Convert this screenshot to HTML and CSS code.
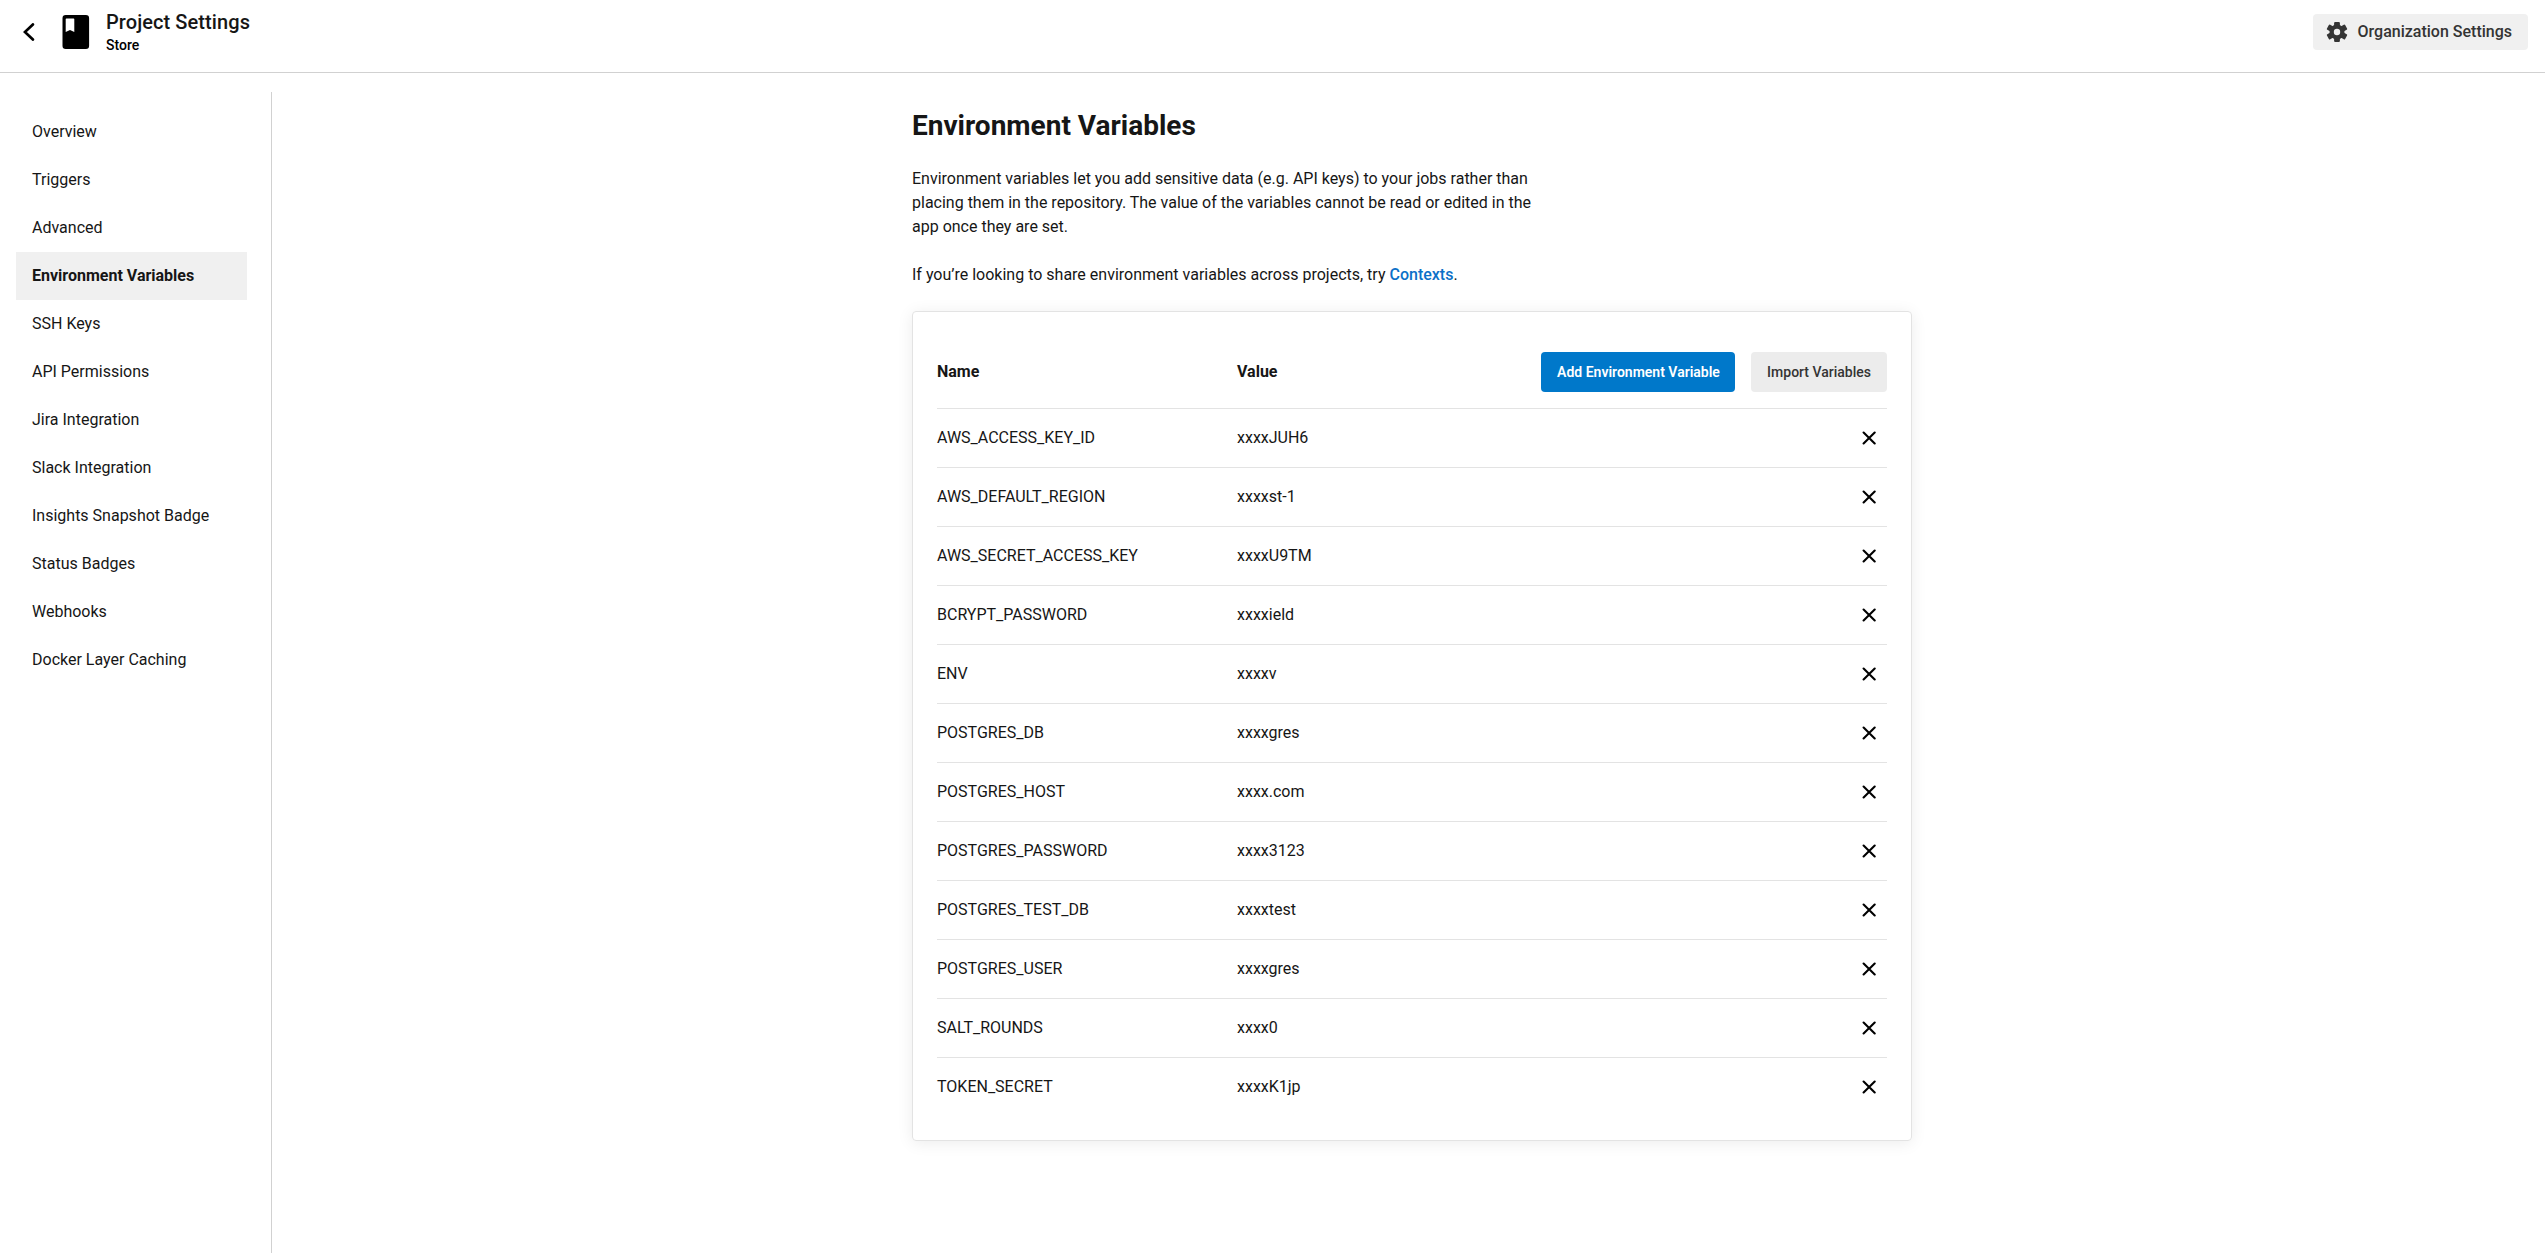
FILE: index.html
```html
<!DOCTYPE html>
<html lang="en">
<head>
<meta charset="utf-8">
<title>Project Settings</title>
<link rel="stylesheet" href="styles.css">
</head>
<body>
<svg class="sprite" aria-hidden="true">
  <symbol id="close" viewBox="0 0 14 14"><path d="M1.6 1.500 12.700 12.500M12.700 1.500 1.600 12.500" fill="none" stroke="#000" stroke-width="2.1" stroke-linecap="round"/></symbol>
  <symbol id="tooth" viewBox="-12 -12 24 24"><rect x="-2.900" y="-10" width="5.800" height="20" rx="1"/></symbol>
</svg>
<header class="topbar">
  <a class="back" href="#" aria-label="Back"><svg width="12" height="18" viewBox="0 0 12 18"><path d="M9.900 1.400 1.900 9l8 7.600" fill="none" stroke="#000" stroke-width="2.700" stroke-linecap="round"/></svg></a>
  <svg class="book" width="28" height="34" viewBox="0 0 28 34"><path fill="#000" fill-rule="evenodd" d="M3.700 0h20.200a3.200 3.200 0 0 1 3.200 3.200v27.600a3.200 3.200 0 0 1-3.200 3.200H3.700a3.200 3.200 0 0 1-3.200-3.200V3.200A3.200 3.200 0 0 1 3.700 0zM4.400 3.600Q3.700 3.600 3.700 4.300V17l4.300-2 4.300 2V4.300q0-.7-.7-.7z"/></svg>
  <div class="titles">
    <h1 class="title">Project Settings</h1>
    <div class="subtitle">Store</div>
  </div>
  <a class="org" href="#">
    <svg width="24" height="24" viewBox="-12 -12 24 24">
      <g fill="#343434">
        <rect x="-2.900" y="-10" width="5.800" height="20" rx="1"/>
        <rect x="-2.900" y="-10.500" width="5.800" height="21" rx="1" transform="rotate(60)"/>
        <rect x="-2.900" y="-10.500" width="5.800" height="21" rx="1" transform="rotate(120)"/>
        <circle r="7.500"/>
      </g>
      <circle r="3.200" fill="#f0f0f0"/>
    </svg>
    <span>Organization Settings</span>
  </a>
</header>
<div class="layout">
  <nav class="sidebar">
    <a href="#">Overview</a>
    <a href="#">Triggers</a>
    <a href="#">Advanced</a>
    <a href="#" class="active">Environment Variables</a>
    <a href="#">SSH Keys</a>
    <a href="#">API Permissions</a>
    <a href="#">Jira Integration</a>
    <a href="#">Slack Integration</a>
    <a href="#">Insights Snapshot Badge</a>
    <a href="#">Status Badges</a>
    <a href="#">Webhooks</a>
    <a href="#">Docker Layer Caching</a>
  </nav>
  <main class="content">
    <h2 class="heading">Environment Variables</h2>
    <p class="intro">Environment variables let you add sensitive data (e.g. API keys) to your jobs rather than placing them in the repository. The value of the variables cannot be read or edited in the app once they are set.</p>
    <p class="intro">If you’re looking to share environment variables across projects, try <a href="#">Contexts</a>.</p>
    <section class="card">
      <div class="row head">
        <span class="name">Name</span><span class="value">Value</span>
        <button class="btn primary">Add Environment Variable</button>
        <button class="btn">Import Variables</button>
      </div>
      <div class="row"><span class="name">AWS_ACCESS_KEY_ID</span><span class="value">xxxxJUH6</span><svg class="remove"><use href="#close"/></svg></div>
      <div class="row"><span class="name">AWS_DEFAULT_REGION</span><span class="value">xxxxst-1</span><svg class="remove"><use href="#close"/></svg></div>
      <div class="row"><span class="name">AWS_SECRET_ACCESS_KEY</span><span class="value">xxxxU9TM</span><svg class="remove"><use href="#close"/></svg></div>
      <div class="row"><span class="name">BCRYPT_PASSWORD</span><span class="value">xxxxield</span><svg class="remove"><use href="#close"/></svg></div>
      <div class="row"><span class="name">ENV</span><span class="value">xxxxv</span><svg class="remove"><use href="#close"/></svg></div>
      <div class="row"><span class="name">POSTGRES_DB</span><span class="value">xxxxgres</span><svg class="remove"><use href="#close"/></svg></div>
      <div class="row"><span class="name">POSTGRES_HOST</span><span class="value">xxxx.com</span><svg class="remove"><use href="#close"/></svg></div>
      <div class="row"><span class="name">POSTGRES_PASSWORD</span><span class="value">xxxx3123</span><svg class="remove"><use href="#close"/></svg></div>
      <div class="row"><span class="name">POSTGRES_TEST_DB</span><span class="value">xxxxtest</span><svg class="remove"><use href="#close"/></svg></div>
      <div class="row"><span class="name">POSTGRES_USER</span><span class="value">xxxxgres</span><svg class="remove"><use href="#close"/></svg></div>
      <div class="row"><span class="name">SALT_ROUNDS</span><span class="value">xxxx0</span><svg class="remove"><use href="#close"/></svg></div>
      <div class="row"><span class="name">TOKEN_SECRET</span><span class="value">xxxxK1jp</span><svg class="remove"><use href="#close"/></svg></div>
    </section>
  </main>
</div>
</body>
</html>
```
FILE: styles.css
```css
* { box-sizing: border-box; }
body {
  margin: 0;
  height: 100vh;
  display: flex;
  flex-direction: column;
  overflow: hidden;
  font: 400 16px/24px Roboto, sans-serif;
  color: #161616;
  background: #fff;
}
a { color: inherit; text-decoration: none; }
.sprite { display: none; }
.topbar {
  flex: none;
  height: 73px;
  border-bottom: 1px solid #d1d1d1;
  display: flex;
  align-items: flex-start;
  padding: 0 17px 0 23px;
}
.back { display: flex; margin-top: 23px; width: 39px; }
.book { margin-top: 15px; }
.titles { margin: 10px 0 0 16px; }
.title { margin: 0; font-size: 20px; line-height: 24px; font-weight: 500; letter-spacing: .08px; }
.subtitle { font-size: 14px; line-height: 20px; font-weight: 500; color: #000; margin-top: 1px; }
.org {
  margin: 14px 0 0 auto;
  height: 36px;
  padding: 0 16px 0 12px;
  display: flex;
  align-items: center;
  gap: 9px;
  border-radius: 4px;
  background: #f0f0f0;
  color: #343434;
  font-weight: 500;
}
.layout { flex: 1; display: flex; padding-top: 19px; }
.sidebar {
  width: 272px;
  border-right: 1px solid #d1d1d1;
  padding: 16px 24px 0 16px;
}
.sidebar a { display: block; padding: 12px 16px; }
.sidebar .active { background: #f0f0f0; font-weight: 700; }
.content { width: 1000px; margin-left: 640px; padding-top: 17px; }
.heading { margin: 0 0 25px; font-size: 28px; line-height: 33px; font-weight: 700; }
.intro { width: 640px; margin: 0 0 24px; }
.intro a { color: #0c70c8; font-weight: 500; }
.card {
  border: 1px solid #e3e3e3;
  border-radius: 4px;
  padding: 24px;
  box-shadow: 0 2px 16px rgba(0, 0, 0, .08);
}
.row { display: flex; align-items: center; height: 59px; border-bottom: 1px solid #e3e3e3; }
.row:last-child { height: 58px; border-bottom: 0; }
.head { height: 73px; font-weight: 700; }
.name { width: 300px; }
.value { flex: 1; }
.btn {
  height: 40px;
  margin-left: 16px;
  padding: 0 16px;
  border: 0;
  border-radius: 4px;
  background: #ececec;
  color: #343434;
  font: 500 14px/20px Roboto, sans-serif;
}
.primary { width: 194px; background: #0078ca; color: #fff; font-weight: 600; white-space: nowrap; }
.remove { width: 14px; height: 14px; margin-right: 11px; }
```
